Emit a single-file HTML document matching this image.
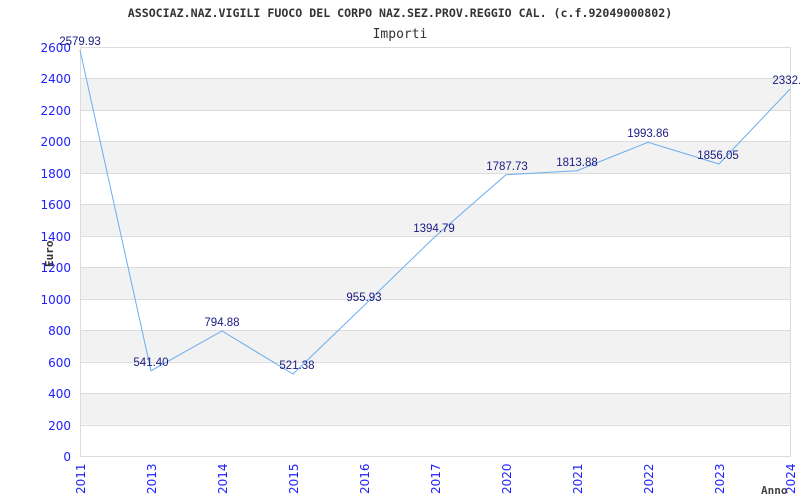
<!DOCTYPE html>
<html><head><meta charset="utf-8"><style>
html,body{margin:0;padding:0;background:#fff;width:800px;height:500px;overflow:hidden}
svg{display:block}
</style></head><body>
<svg width="800" height="500" viewBox="0 0 800 500" xmlns="http://www.w3.org/2000/svg">
<g fill="#f2f2f2">
<rect x="80" y="78.5" width="710" height="31.5"/>
<rect x="80" y="141.4" width="710" height="31.5"/>
<rect x="80" y="204.3" width="710" height="31.5"/>
<rect x="80" y="267.3" width="710" height="31.5"/>
<rect x="80" y="330.2" width="710" height="31.5"/>
<rect x="80" y="393.1" width="710" height="31.5"/>
</g>
<g stroke="#dcdcdc" stroke-width="1">
<line x1="80" x2="790" y1="47.5" y2="47.5"/><line x1="80" x2="790" y1="78.5" y2="78.5"/><line x1="80" x2="790" y1="110.5" y2="110.5"/><line x1="80" x2="790" y1="141.5" y2="141.5"/><line x1="80" x2="790" y1="173.5" y2="173.5"/><line x1="80" x2="790" y1="204.5" y2="204.5"/><line x1="80" x2="790" y1="236.5" y2="236.5"/><line x1="80" x2="790" y1="267.5" y2="267.5"/><line x1="80" x2="790" y1="299.5" y2="299.5"/><line x1="80" x2="790" y1="330.5" y2="330.5"/><line x1="80" x2="790" y1="362.5" y2="362.5"/><line x1="80" x2="790" y1="393.5" y2="393.5"/><line x1="80" x2="790" y1="425.5" y2="425.5"/><line x1="80" x2="790" y1="456.5" y2="456.5"/>
<line x1="80.5" x2="80.5" y1="47" y2="457"/><line x1="790.5" x2="790.5" y1="47" y2="457"/>
</g>
<polyline fill="none" stroke="#6aaef0" stroke-width="1" points="80,50.2 151,370.8 222,331 293,374 364,305.6 435,236.6 506,174.8 577,170.7 648,142.3 719,164 790,89.1"/>
<text x="400" y="17" text-anchor="middle" font-family="'DejaVu Sans Mono',monospace" font-weight="bold" font-size="11.6" fill="#333">ASSOCIAZ.NAZ.VIGILI FUOCO DEL CORPO NAZ.SEZ.PROV.REGGIO CAL. (c.f.92049000802)</text>
<text x="400" y="38" text-anchor="middle" font-family="'DejaVu Sans Mono',monospace" font-size="13" fill="#333">Importi</text>
<g font-family="'DejaVu Sans',sans-serif" font-size="12" fill="#2020ff" text-anchor="end">
<text x="71" y="52">2600</text><text x="71" y="83">2400</text><text x="71" y="115">2200</text><text x="71" y="146">2000</text><text x="71" y="178">1800</text><text x="71" y="209">1600</text><text x="71" y="241">1400</text><text x="71" y="272">1200</text><text x="71" y="304">1000</text><text x="71" y="335">800</text><text x="71" y="367">600</text><text x="71" y="398">400</text><text x="71" y="430">200</text><text x="71" y="461">0</text>
</g>
<g font-family="'DejaVu Sans',sans-serif" font-size="12" fill="#2020ff">
<text transform="translate(85,494) rotate(-90)">2011</text>
<text transform="translate(156,494) rotate(-90)">2013</text>
<text transform="translate(227,494) rotate(-90)">2014</text>
<text transform="translate(298,494) rotate(-90)">2015</text>
<text transform="translate(369,494) rotate(-90)">2016</text>
<text transform="translate(440,494) rotate(-90)">2017</text>
<text transform="translate(511,494) rotate(-90)">2020</text>
<text transform="translate(582,494) rotate(-90)">2021</text>
<text transform="translate(653,494) rotate(-90)">2022</text>
<text transform="translate(724,494) rotate(-90)">2023</text>
<text transform="translate(795,494) rotate(-90)">2024</text>
</g>
<text x="761" y="494" font-family="'DejaVu Sans Mono',monospace" font-weight="bold" font-size="11" fill="#444">Anno</text>
<text transform="translate(53,267) rotate(-90)" font-family="'DejaVu Sans Mono',monospace" font-weight="bold" font-size="11" fill="#333">Euro</text>
<g font-family="'Liberation Sans',sans-serif" font-size="11.5" fill="#1a1a80" text-anchor="middle">
<text x="80" y="45">2579.93</text>
<text x="151" y="366">541.40</text>
<text x="222" y="326">794.88</text>
<text x="297" y="369">521.38</text>
<text x="364" y="301">955.93</text>
<text x="434" y="232">1394.79</text>
<text x="507" y="170">1787.73</text>
<text x="577" y="166">1813.88</text>
<text x="648" y="137">1993.86</text>
<text x="718" y="159">1856.05</text>
<text x="790" y="84">2332.3</text>
</g>
</svg>
</body></html>
